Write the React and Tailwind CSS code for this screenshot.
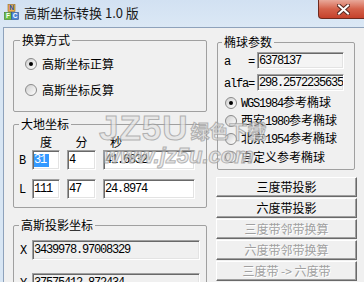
import React from "react";

function AppIcon() {
  return (
    <svg width="15" height="16" viewBox="0 0 15 16">
      <rect x="4" y="0.5" width="7" height="7" fill="#e9b04a" stroke="#9a6a20" strokeWidth="0.6" />
      <text x="7.5" y="6.3" fontSize="6.5" fontWeight="bold" textAnchor="middle" fill="#2a4fb0" fontFamily="Liberation Sans, sans-serif">N</text>
      <rect x="0.5" y="8.5" width="7" height="7" fill="#6cbf45" stroke="#3d7a22" strokeWidth="0.6" />
      <text x="4" y="14.3" fontSize="6.5" fontWeight="bold" textAnchor="middle" fill="#fff" fontFamily="Liberation Sans, sans-serif">F</text>
      <rect x="7.5" y="8.5" width="7" height="7" fill="#4b86d6" stroke="#28508f" strokeWidth="0.6" />
      <text x="11" y="14.3" fontSize="6.5" fontWeight="bold" textAnchor="middle" fill="#fff" fontFamily="Liberation Sans, sans-serif">C</text>
    </svg>
  );
}

function CloseBtn() {
  return (
    <div className="shrink-0 -mr-[4px] w-[50px] h-[19px] rounded-bl-[4px] rounded-br-[4px] border border-t-0 border-[#6e2a1e] bg-linear-to-b from-[#e8a89a] via-[#d4614a] to-[#c5412b] flex items-center justify-center">
      <svg width="13" height="11" viewBox="0 0 13 11">
        <path d="M2 1.5 L11 9.5 M11 1.5 L2 9.5" stroke="#5a2a22" strokeWidth="4" strokeLinecap="square" />
        <path d="M2 1.5 L11 9.5 M11 1.5 L2 9.5" stroke="#ffffff" strokeWidth="2" strokeLinecap="square" />
      </svg>
    </div>
  );
}

function Radio({ checked, children }) {
  return (
    <div className="flex items-center h-[16px]">
      <span className="shrink-0 w-[12px] h-[12px] rounded-full border border-[#8a8a8a] bg-linear-to-br from-[#cfcfcf] to-white flex items-center justify-center">
        {checked && <span className="w-[4px] h-[4px] rounded-full bg-black" />}
      </span>
      <span className="ml-[5px] whitespace-nowrap">{children}</span>
    </div>
  );
}

function Radio2({ checked, children }) {
  return (
    <div className="flex items-center h-[18px]">
      <span className="shrink-0 w-[12px] h-[12px] rounded-full border border-[#8a8a8a] bg-linear-to-br from-[#cfcfcf] to-white flex items-center justify-center">
        {checked && <span className="w-[4px] h-[4px] rounded-full bg-black" />}
      </span>
      <span className="ml-[4px] whitespace-nowrap">{children}</span>
    </div>
  );
}

function M({ children }) {
  return (
    <span className="font-['Liberation_Mono',monospace] text-[12px] tracking-[-1.2px] whitespace-pre">{children}</span>
  );
}

function Edit({ className, children }) {
  return (
    <div
      className={`flex items-center overflow-hidden whitespace-nowrap border border-t-[#a0a0a0] border-l-[#a0a0a0] border-r-white border-b-white shadow-[inset_1px_1px_0_#696969,inset_-1px_-1px_0_#e3e3e3] pl-[1px] font-['Liberation_Mono',monospace] text-[12px] tracking-[-1.2px] text-black ${className}`}
    >
      {children}
    </div>
  );
}

function Btn({ disabled, children }) {
  return (
    <div
      className={`h-[20px] flex items-center justify-center whitespace-pre border border-t-white border-l-white border-r-[#696969] border-b-[#696969] shadow-[inset_-1px_-1px_0_#a0a0a0] bg-[#f0f0f0] ${
        disabled ? "text-[#a0a0a0] [text-shadow:1px_1px_0_#ffffff]" : "text-black"
      }`}
    >
      {children}
    </div>
  );
}

export default function App() {
  return (
    <div className="relative w-[364px] h-[282px] overflow-hidden flex flex-col bg-[#d8e6f4] font-['Noto_Sans_CJK_SC',sans-serif] text-[12px] leading-[14px] text-black">
      {/* title bar */}
      <div className="h-[27px] shrink-0 flex bg-linear-to-b from-[#d2e1f2] to-[#dbe8f5]">
        <div className="pl-[4px] pt-[4px]">
          <AppIcon />
        </div>
        <div className="ml-[5px] mt-[6px] whitespace-nowrap text-[#1a1a1a] text-[13px]">高斯坐标转换 1.0 版</div>
        <div className="flex-1" />
        <CloseBtn />
      </div>

      {/* client */}
      <div className="flex-1 min-h-0 overflow-hidden ml-[3px] bg-[#f0f0f0] border-l border-t border-[#8ea2bb] flex pl-[9px]">
        {/* left column */}
        <div className="w-[194px] shrink-0 flex flex-col">
          <fieldset className="mt-[5px] border border-[#a0a0a0] rounded-[2px]">
            <legend className="ml-[6px] px-[2px] leading-[14px]">换算方式</legend>
            <div className="pl-[11px] pt-[9px] pb-[13px] flex flex-col gap-[10px]">
              <Radio checked>高斯坐标正算</Radio>
              <Radio>高斯坐标反算</Radio>
            </div>
          </fieldset>

          <fieldset className="mt-[5px] border border-[#a0a0a0] rounded-[2px]">
            <legend className="ml-[5px] px-[2px] leading-[14px]">大地坐标</legend>
            <div className="pl-[5px] pt-[4px] pb-[8px] flex flex-col">
              <div className="flex h-[14px] pl-[13px]">
                <span className="w-[28px] text-center">度</span>
                <span className="ml-[7px] w-[29px] text-center">分</span>
                <span className="ml-[14px]">秒</span>
              </div>
              <div className="mt-[1px] flex items-center h-[20px]">
                <span className="w-[13px]"><M>B</M></span>
                <Edit className="w-[28px] h-[20px] bg-white">
                  <span className="bg-[#3399ff] text-white h-[13px] leading-[13px] pr-[3px]">31</span>
                </Edit>
                <Edit className="ml-[7px] w-[29px] h-[20px] bg-white">4</Edit>
                <Edit className="ml-[7px] w-[92px] h-[20px] bg-white">41.6832</Edit>
              </div>
              <div className="mt-[9px] flex items-center h-[20px]">
                <span className="w-[13px]"><M>L</M></span>
                <Edit className="w-[28px] h-[20px] bg-white">111</Edit>
                <Edit className="ml-[7px] w-[29px] h-[20px] bg-white">47</Edit>
                <Edit className="ml-[7px] w-[92px] h-[20px] bg-white">24.8974</Edit>
              </div>
            </div>
          </fieldset>

          <fieldset className="mt-[10px] border border-[#a0a0a0] rounded-[2px]">
            <legend className="ml-[5px] px-[2px] leading-[14px]">高斯投影坐标</legend>
            <div className="pl-[6px] pt-[8px] pb-[10px] flex flex-col gap-[13px]">
              <div className="flex items-center h-[20px]">
                <span className="w-[12px]"><M>X</M></span>
                <Edit className="w-[168px] h-[20px] bg-[#f0f0f0]">3439978.97008329</Edit>
              </div>
              <div className="flex items-center h-[20px]">
                <span className="w-[12px]"><M>Y</M></span>
                <Edit className="w-[168px] h-[20px] bg-[#f0f0f0]">37575412.872434</Edit>
              </div>
            </div>
          </fieldset>
        </div>

        {/* right column */}
        <div className="w-[141px] shrink-0 ml-[9px] flex flex-col">
          <fieldset className="mt-[7px] ml-[1px] w-[138px] border border-[#a0a0a0] rounded-[2px]">
            <legend className="ml-[4px] px-[2px] leading-[14px]">椭球参数</legend>
            <div className="pt-[3px] pb-[3px] flex flex-col">
              <div className="flex items-center h-[17px] pl-[6px]">
                <span className="w-[33px]"><M>{"a   ="}</M></span>
                <Edit className="w-[87px] h-[17px] bg-[#f4f4f4]">6378137</Edit>
              </div>
              <div className="mt-[5px] flex items-center h-[17px] pl-[6px]">
                <span className="w-[33px]"><M>alfa=</M></span>
                <Edit className="w-[87px] h-[17px] bg-[#f4f4f4]">298.2572235635</Edit>
              </div>
              <div className="mt-[3px] pl-[7px] flex flex-col">
                <Radio2 checked><M>WGS1984</M>参考椭球</Radio2>
                <Radio2>西安<M>1980</M>参考椭球</Radio2>
                <Radio2>北京<M>1954</M>参考椭球</Radio2>
                <Radio2>自定义参考椭球</Radio2>
              </div>
            </div>
          </fieldset>

          <div className="mt-[7px] flex flex-col gap-[1px]">
            <Btn>三度带投影</Btn>
            <Btn>六度带投影</Btn>
            <Btn disabled>三度带邻带换算</Btn>
            <Btn disabled>六度带邻带换算</Btn>
            <Btn disabled>{"三度带 -> 六度带"}</Btn>
          </div>
        </div>
      </div>

      {/* watermark overlay */}
      <div className="absolute left-[99px] top-[111px] pointer-events-none opacity-75 flex flex-col">
        <div className="flex items-end h-[34px] whitespace-nowrap font-bold text-[#e4e4e4] [-webkit-text-stroke:1px_#9c9c9c]">
          <span className="font-['Liberation_Sans',sans-serif] text-[35px] leading-[34px] tracking-[1px]">JZ5U</span>
          <span className="ml-[2px] font-['Noto_Sans_CJK_SC',sans-serif] text-[19px] leading-[28px]">绿色下载</span>
        </div>
        <div className="ml-[4px] mt-[1px] h-[20px] whitespace-nowrap font-['Liberation_Sans',sans-serif] font-bold italic text-[22px] leading-[20px] text-[#e4e4e4] [-webkit-text-stroke:1px_#9c9c9c]">
          www.jz5u.com
        </div>
      </div>
    </div>
  );
}
